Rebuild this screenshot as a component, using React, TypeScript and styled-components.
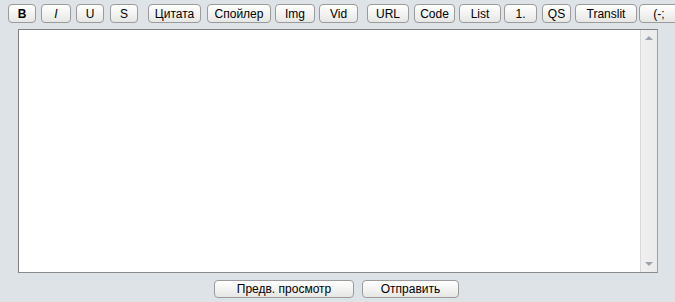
import React from "react";
import styled, { createGlobalStyle } from "styled-components";

const colours = {
    page: "#DEE3E7",
    border: "#9B9B9B",
    field: "#808080",
    arrow: "#9AA3AE"
};

const GlobalStyle =
  createGlobalStyle`
  body {
    margin: 0;
    background-color: ${colours.page};
    font-family: "Liberation Sans", Arial, sans-serif;
  }
  `;

const Page =
  styled.div`
  width: 675px;
  height: 302px;
  overflow: hidden;
  background-color: ${colours.page};
  `;

const Toolbar =
  styled.div`
  display: flex;
  white-space: nowrap;
  padding: 4px 0 0 8px;
  height: 19px;
  `;

interface ButtonProps {
  $w: number;
  $gap?: number;
  $bold?: boolean;
  $italic?: boolean;
}

const Button =
  styled.button<ButtonProps>`
  flex: none;
  box-sizing: border-box;
  width: ${props => props.$w}px;
  height: 19px;
  margin: 0 0 0 ${props => props.$gap ?? 0}px;
  padding: 0;
  border: 1px solid ${colours.border};
  border-radius: 4px;
  background: linear-gradient(#ffffff, #f1f1f0 60%, #e6e6e4);
  font-family: "Liberation Sans", Arial, sans-serif;
  font-size: 12px;
  line-height: 16px;
  font-weight: ${props => props.$bold ? "bold" : "normal"};
  font-style: ${props => props.$italic ? "italic" : "normal"};
  color: #000;
  cursor: pointer;
  `;

const Field =
  styled.div`
  display: flex;
  box-sizing: border-box;
  width: 640px;
  height: 244px;
  margin: 6px 0 0 18px;
  border: 1px solid ${colours.field};
  border-right-color: #a0a0a0;
  border-bottom-color: #8a8a8a;
  background-color: #fff;
  `;

const Text =
  styled.textarea`
  flex: 1;
  border: none;
  outline: none;
  resize: none;
  padding: 2px;
  font-family: "Liberation Sans", Arial, sans-serif;
  font-size: 12px;
  `;

const ScrollBar =
  styled.div`
  display: flex;
  flex-direction: column;
  justify-content: space-between;
  align-items: center;
  width: 17px;
  padding: 6px 0 6px;
  box-sizing: border-box;
  border-left: 1px solid #d8d8d8;
  background: linear-gradient(90deg, #f0f0f0, #ebebeb);
  `;

const Arrow =
  styled.span<{ $down?: boolean }>`
  width: 0;
  height: 0;
  border-left: 4px solid transparent;
  border-right: 4px solid transparent;
  ${props => props.$down
      ? `border-top: 4px solid ${colours.arrow};`
      : `border-bottom: 4px solid ${colours.arrow};`}
  `;

const Actions =
  styled.div`
  display: flex;
  justify-content: center;
  gap: 8px;
  margin-top: 7px;
  padding-right: 2px;
  `;

const ActionButton =
  styled(Button)`
  height: 18px;
  line-height: 15px;
  font-size: 12px;
  `;

const tools: Array<ButtonProps & { label: string }> = [
    { label: "B", $w: 28, $bold: true },
    { label: "I", $w: 30, $gap: 5, $italic: true },
    { label: "U", $w: 28, $gap: 5 },
    { label: "S", $w: 28, $gap: 6 },
    { label: "Цитата", $w: 53, $gap: 10 },
    { label: "Спойлер", $w: 64, $gap: 6 },
    { label: "Img", $w: 40, $gap: 4 },
    { label: "Vid", $w: 39, $gap: 4 },
    { label: "URL", $w: 42, $gap: 9 },
    { label: "Code", $w: 41, $gap: 5 },
    { label: "List", $w: 42, $gap: 4 },
    { label: "1.", $w: 33, $gap: 3 },
    { label: "QS", $w: 29, $gap: 5 },
    { label: "Translit", $w: 62, $gap: 4 },
    { label: "(-;", $w: 40, $gap: 2 }
];

const App =
  () => (
      <Page>
          <GlobalStyle/>
          <Toolbar>
              {tools.map(({ label, ...rest }) => (
                  <Button key={label} {...rest}>{label}</Button>
              ))}
          </Toolbar>
          <Field>
              <Text/>
              <ScrollBar>
                  <Arrow/>
                  <Arrow $down/>
              </ScrollBar>
          </Field>
          <Actions>
              <ActionButton $w={140}>Предв. просмотр</ActionButton>
              <ActionButton $w={97}>Отправить</ActionButton>
          </Actions>
      </Page>
  );

export default App;
